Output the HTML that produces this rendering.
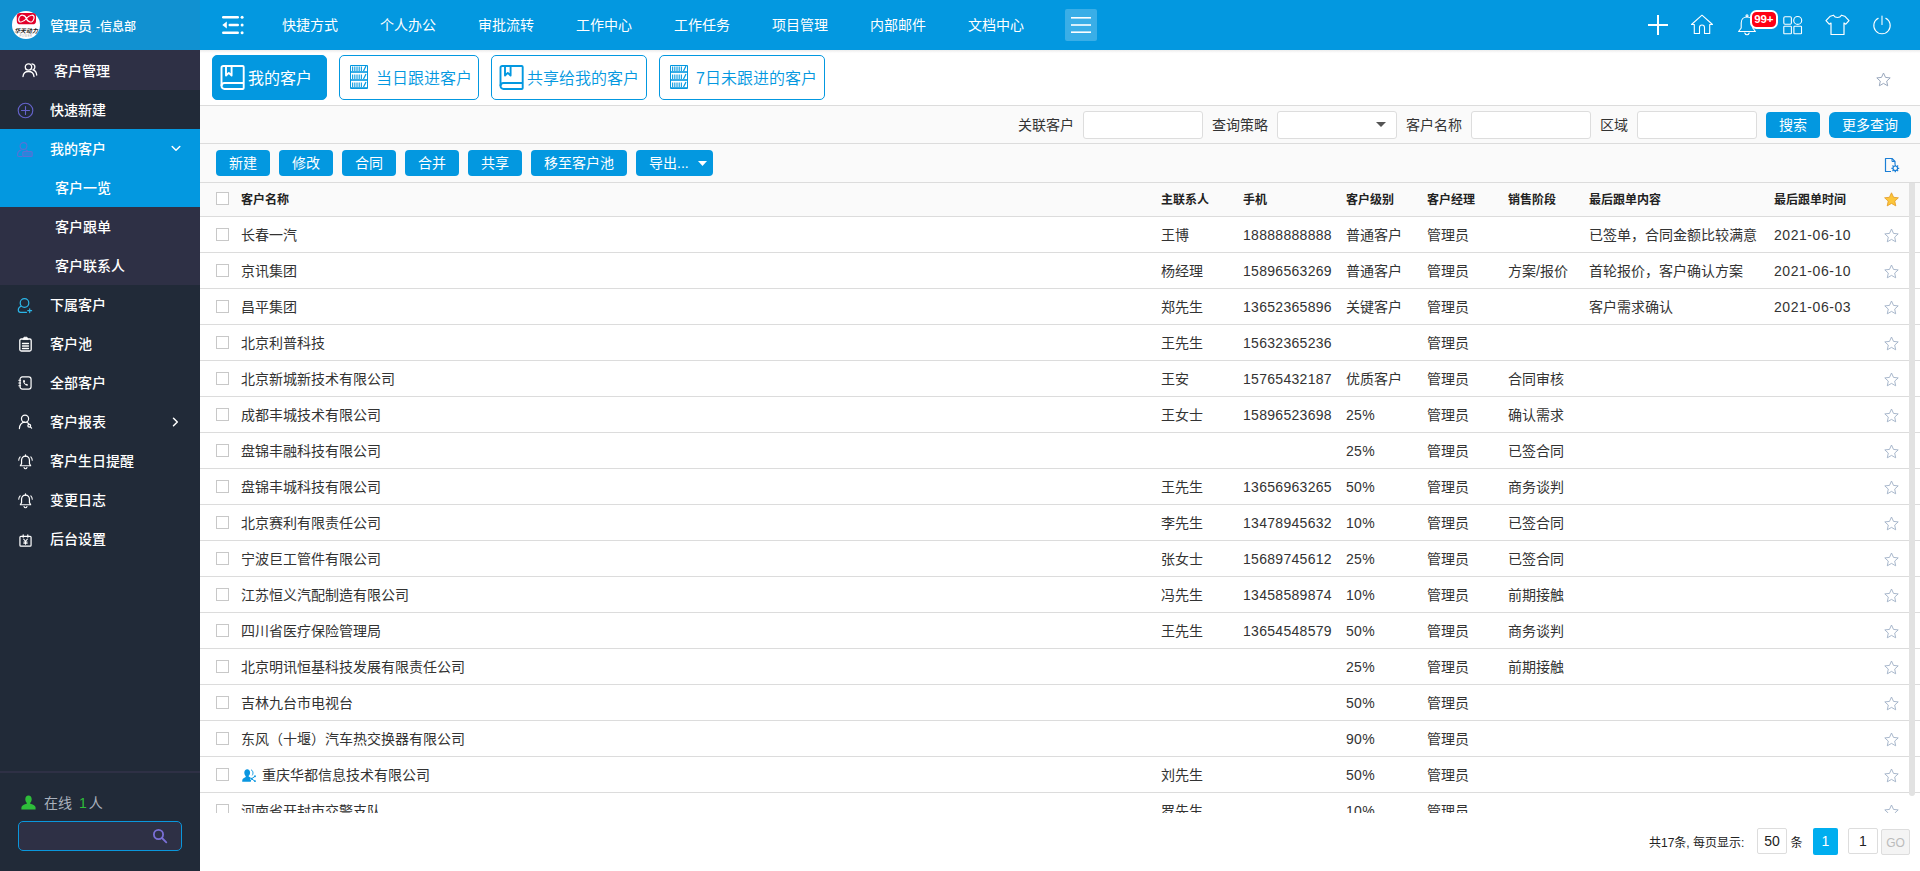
<!DOCTYPE html>
<html lang="zh-CN">
<head>
<meta charset="utf-8">
<title>客户一览</title>
<style>
*{box-sizing:border-box;margin:0;padding:0}
html,body{width:1920px;height:871px;overflow:hidden;background:#fff}
body{font-family:"Liberation Sans","Noto Sans CJK SC",sans-serif;font-size:14px;color:#333;position:relative}
svg{display:block}
#side{position:absolute;left:0;top:0;width:200px;height:871px;background:#212a38;color:#fff}
#side .hd{position:absolute;left:0;top:0;width:200px;height:50px;background:#1191d1}
#side .hd .logo{position:absolute;left:12px;top:11px;width:28px;height:28px}
#side .hd .nm{position:absolute;left:50px;top:0;line-height:52px;font-size:14px;color:#fff;white-space:nowrap;font-weight:500}
.mi{position:absolute;left:0;width:200px;height:39px;line-height:39px;font-size:14px;color:#fff;white-space:nowrap}
.mi .tx{position:absolute;left:50px;top:1px;font-weight:500}
.mi.sub .tx{left:55px}
.mi svg{position:absolute}
.bg2{background:#2e3045}
.bgb{background:#0398e0}
#top{position:absolute;left:200px;top:0;width:1720px;height:50px;background:#0398e0;color:#fff}
#top .nv{position:absolute;top:0;line-height:50px;font-size:14px;color:#fff;white-space:nowrap}
#top svg{position:absolute}
.tab{position:absolute;top:55px;height:45px;border:1px solid #0398e0;border-radius:5px;color:#0398e0;font-size:16px;line-height:43px;white-space:nowrap;background:#fff;font-weight:350}
.tab.on{background:#0398e0;color:#fff;font-weight:400}
.tab .tx{position:absolute;top:1px}
.tab svg{position:absolute}
.hl{position:absolute;left:200px;width:1720px;height:1px;background:#dcdcdc}
.band{position:absolute;left:200px;width:1720px;background:#fafafa}
.lb{position:absolute;top:106px;line-height:38px;font-size:14px;color:#333;white-space:nowrap}
.ip{position:absolute;top:111px;height:28px;width:120px;border:1px solid #ddd;border-radius:3px;background:#fff}
.btn{position:absolute;height:26px;line-height:26px;background:#0398e0;color:#fff;border-radius:4px;font-size:14px;text-align:center;white-space:nowrap}
#tbl{position:absolute;left:200px;top:183px;width:1720px;height:630px;overflow:hidden}
.th{position:absolute;left:0;top:0;width:1720px;height:33px;background:#fafafa;font-size:12px;font-weight:bold;color:#222;line-height:35px}
.tr{position:absolute;left:0;width:1720px;height:36px;border-top:1px solid #dcdcdc;line-height:37px;font-size:14px;color:#333}
.c{position:absolute;top:0;white-space:nowrap}
.cb{position:absolute;left:16px;width:13px;height:13px;border:1px solid #c8c8c8;background:#fff}
.num{letter-spacing:0.3px}
.dt{letter-spacing:0.55px}
.st{position:absolute;left:1683.500px}
#pg{position:absolute;left:200px;top:813px;width:1720px;height:58px;font-size:12px;color:#222}
#pg div{position:absolute;white-space:nowrap}
</style>
</head>
<body>
<div id="side">
<div class="hd">
<svg class="logo" viewBox="0 0 28 28"><circle cx="14" cy="14" r="14" fill="#fff"/>
<rect x="4.800" y="1.900" width="19.200" height="11.400" rx="3.400" fill="#e2002a"/>
<path transform="translate(14.400 7.600) skewX(-12)" d="M0 0C-1.900-3.800-7.600-5.200-7.600 0S-1.900 3.800 0 0C1.900-3.800 7.600-5.200 7.600 0S1.900 3.800 0 0z" fill="none" stroke="#fff" stroke-width="1.200"/>
<text x="14" y="21.600" font-size="5.900" font-weight="bold" font-style="italic" text-anchor="middle" fill="#1a1a1a" font-family="Liberation Sans,Noto Sans CJK SC,sans-serif">华天动力</text>
<text x="14" y="25.700" font-size="2.800" text-anchor="middle" fill="#aaa" letter-spacing="0.500" font-family="Liberation Sans,sans-serif">POWER</text></svg>
<div class="nm">管理员 <span style="font-size:12px">-信息部</span></div>
</div>
<div class="mi bg2" style="top:50px;height:40px;line-height:41px"><svg style="left:22px;top:12px" width="16" height="16" viewBox="0 0 16 16" fill="none" stroke="#fff" stroke-width="1.300" stroke-linecap="round"><circle cx="6.500" cy="5" r="3.200"/><path d="M1 14.500c.3-3.200 2.500-5 5.500-5s5.200 1.800 5.500 5"/><path d="M10 1.900c1.800.2 2.900 1.500 2.900 3.100 0 1.300-.7 2.300-1.700 2.800 1.900.7 3.300 2.500 3.500 5.200"/></svg><span class="tx" style="left:54px">客户管理</span></div>
<div class="mi " style="top:90px;height:39px;line-height:39px"><svg style="left:16.500px;top:12px" width="17" height="17" viewBox="0 0 17 17" fill="none" stroke="#6563cb" stroke-width="1.100" stroke-linecap="round"><circle cx="8.500" cy="8.500" r="7.300"/><path d="M8.500 4.500v8M4.500 8.500h8"/></svg><span class="tx">快速新建</span></div>
<div class="mi bgb" style="top:129px;height:39px;line-height:39px"><svg style="left:16px;top:12px" width="17" height="18" viewBox="0 0 17 18" fill="none" stroke="#5872d6" stroke-width="1.100" stroke-linecap="round"><circle cx="7.500" cy="5" r="3.400"/><path d="M6 15.500H3c-1 0-1.500-.6-1.500-1.500 0-2.500 1.500-4.300 3.500-5M10 9c.5.200 1 .5 1.400.9"/><rect x="6.800" y="10.500" width="9.400" height="5" rx="1" fill="rgba(88,114,214,.45)"/></svg><span class="tx">我的客户</span><svg style="left:171px;top:16px" width="10" height="7" viewBox="0 0 10 7" fill="none" stroke="#fff" stroke-width="1.500" stroke-linecap="round" stroke-linejoin="round"><path d="M1.200 1.500L5 5.300l3.800-3.800"/></svg></div>
<div class="mi bgb sub" style="top:168px;height:39px;line-height:39px"><span class="tx">客户一览</span></div>
<div class="mi bg2 sub" style="top:207px;height:39px;line-height:39px"><span class="tx">客户跟单</span></div>
<div class="mi bg2 sub" style="top:246px;height:39px;line-height:39px"><span class="tx">客户联系人</span></div>
<div class="mi " style="top:285px;height:39px;line-height:39px"><svg style="left:17px;top:12px" width="16" height="17" viewBox="0 0 16 17" fill="none" stroke="#2bb6e8" stroke-width="1.200" stroke-linecap="round"><ellipse cx="7.500" cy="6" rx="4.300" ry="4.300"/><path d="M4 9.300C2.200 10 1.300 11.400 1.300 13c0 1.500.8 2.300 2.200 2.300h6M12.700 11.800v3.800M10.800 13.700h3.800"/></svg><span class="tx">下属客户</span></div>
<div class="mi " style="top:324px;height:39px;line-height:39px"><svg style="left:18.500px;top:12px" width="13" height="16" viewBox="0 0 13 16" fill="none" stroke="#fff" stroke-width="1.300" stroke-linecap="round"><rect x=".8" y="3" width="11.400" height="12" rx="1.500"/><path d="M4 3.200L5 1.200h3l1 2z" fill="#fff" stroke-width=".8"/><path d="M3.500 7.500h6M3.500 10h6M3.500 12.500h6"/></svg><span class="tx">客户池</span></div>
<div class="mi " style="top:363px;height:39px;line-height:39px"><svg style="left:17.500px;top:12.500px" width="14" height="14" viewBox="0 0 15 15" fill="none" stroke="#fff" stroke-width="1.300" stroke-linecap="round"><rect x="2.200" y="1" width="11.800" height="13" rx="2.500"/><path d="M.8 4.500h2M.8 7.500h2M.8 10.500h2" stroke-width="1.100"/><path d="M6 4.300c-.8.500-.8 2.300.6 4.100s3 2.300 3.800 1.800l.4-.9-1.600-1-.8.500c-.6-.3-1.400-1.300-1.500-2l.7-.6-.6-1.800z" fill="#fff" stroke="none"/></svg><span class="tx">全部客户</span></div>
<div class="mi " style="top:402px;height:39px;line-height:39px"><svg style="left:17.500px;top:12px" width="15" height="16" viewBox="0 0 16 17" fill="none" stroke="#fff" stroke-width="1.300" stroke-linecap="round"><circle cx="7.500" cy="5" r="3.800"/><path d="M1.500 15.500c.2-3.500 2.300-6.300 5.500-6.800M9.500 9c.8.300 1.500.8 2 1.400"/><circle cx="12" cy="12.500" r="1.500"/><path d="M13.200 13.700l1.300 1.300"/></svg><span class="tx">客户报表</span><svg style="left:172px;top:15px" width="7" height="10" viewBox="0 0 7 10" fill="none" stroke="#fff" stroke-width="1.500" stroke-linecap="round" stroke-linejoin="round"><path d="M1.500 1.200L5.300 5 1.500 8.800"/></svg></div>
<div class="mi " style="top:441px;height:39px;line-height:39px"><svg style="left:17.500px;top:12.500px" width="15" height="16" viewBox="0 0 16 17" fill="none" stroke="#fff" stroke-width="1.300" stroke-linecap="round" stroke-linejoin="round"><path d="M8 2.200c-2.700 0-4.200 2-4.200 4.500v3.500l-1.300 2.300h11l-1.300-2.300V6.700c0-2.500-1.500-4.500-4.200-4.500z"/><path d="M8 .8v1.400M6.500 14.500c.3.800.9 1.200 1.500 1.200s1.200-.4 1.500-1.200"/><path d="M2.300 3C1.300 4 .8 5.200.8 6.700M13.700 3c1 1 1.500 2.200 1.500 3.700" stroke-width="1.100"/></svg><span class="tx">客户生日提醒</span></div>
<div class="mi " style="top:480px;height:39px;line-height:39px"><svg style="left:17.500px;top:12.500px" width="15" height="16" viewBox="0 0 16 17" fill="none" stroke="#fff" stroke-width="1.300" stroke-linecap="round" stroke-linejoin="round"><path d="M8 2.200c-2.700 0-4.200 2-4.200 4.500v3.500l-1.300 2.300h11l-1.300-2.300V6.700c0-2.500-1.500-4.500-4.200-4.500z"/><path d="M8 .8v1.400M6.500 14.500c.3.800.9 1.200 1.500 1.200s1.200-.4 1.500-1.200"/><path d="M2.300 3C1.300 4 .8 5.200.8 6.700M13.700 3c1 1 1.500 2.200 1.500 3.700" stroke-width="1.100"/></svg><span class="tx">变更日志</span></div>
<div class="mi " style="top:519px;height:39px;line-height:39px"><svg style="left:18.500px;top:14.500px" width="13" height="13" viewBox="0 0 14 14" fill="none" stroke="#fff" stroke-width="1.300" stroke-linecap="round"><rect x="1" y="2.500" width="12" height="10.500" rx="1"/><path d="M4.500 1v2.500M9.500 1v2.500"/><path d="M5 5.500l2 2.300 2-2.300M7 7.800v3.200M5.200 8.500h3.600M5.200 10h3.600" stroke-width="1.100"/></svg><span class="tx">后台设置</span></div>
<div style="position:absolute;left:0;top:771px;width:200px;height:2px;background:#2e3045"></div>
<svg style="position:absolute;left:21px;top:795px" width="15" height="15" viewBox="0 0 15 15"><path d="M7.500 0.500c2 0 3.200 1.600 3.200 3.700 0 1.500-.6 2.900-1.500 3.600v.9c2.500.6 5 1.700 5.300 3.300.1.900.1 1.700.1 2.500H.4c0-.8 0-1.600.1-2.500.3-1.600 2.800-2.700 5.300-3.300v-.9c-.9-.7-1.500-2.100-1.500-3.600 0-2.100 1.200-3.700 3.200-3.700z" fill="#2ebd3a"/></svg>
<div style="position:absolute;left:44px;top:793px;line-height:20px;font-size:14px;color:#a9b1bd;white-space:nowrap">在线 <span style="color:#2ebd3a;margin:0 2px 0 3px">1</span>人</div>
<div style="position:absolute;left:18px;top:821px;width:164px;height:30px;border:1px solid #0a97dc;border-radius:5px;background:#2e3045"></div>
<svg style="position:absolute;left:152px;top:828px" width="16" height="16" viewBox="0 0 16 16" fill="none" stroke="#7a6fd6" stroke-width="1.800" stroke-linecap="round"><circle cx="6.500" cy="6.500" r="4.600"/><path d="M10 10l4.300 4.300"/></svg>
</div>
<div id="top">
<svg style="left:22px;top:15px" width="22" height="20" viewBox="0 0 22 20" fill="#fff"><rect x="0" y="1" width="17" height="2.400" rx="1.200"/><rect x="6.500" y="8.800" width="10.500" height="2.400" rx="1.200"/><rect x="0" y="16.600" width="17" height="2.400" rx="1.200"/><circle cx="20.100" cy="2.200" r="1.500"/><circle cx="20.100" cy="10" r="1.500"/><circle cx="20.100" cy="17.800" r="1.500"/><path d="M.3 10l4.500-3.600v7.200z"/></svg>
<div class="nv" style="left:82px">快捷方式</div>
<div class="nv" style="left:180px">个人办公</div>
<div class="nv" style="left:278px">审批流转</div>
<div class="nv" style="left:376px">工作中心</div>
<div class="nv" style="left:474px">工作任务</div>
<div class="nv" style="left:572px">项目管理</div>
<div class="nv" style="left:670px">内部邮件</div>
<div class="nv" style="left:768px">文档中心</div>
<div style="position:absolute;left:865px;top:9px;width:32px;height:32px;background:rgba(255,255,255,.22);border-radius:2px"></div>
<svg style="left:871px;top:16px" width="20" height="18" viewBox="0 0 20 18" fill="#fff"><rect x="0" y="1" width="20" height="1.600"/><rect x="0" y="8.200" width="20" height="1.600"/><rect x="0" y="15.400" width="20" height="1.600"/></svg>
<svg style="left:1448px;top:15px" width="20" height="20" viewBox="0 0 20 20" fill="#fff"><rect x="9" y="0" width="2" height="20"/><rect x="0" y="9" width="20" height="2"/></svg>
<svg style="left:1490px;top:14px" width="24" height="21" viewBox="0 0 24 21" fill="none" stroke="#fff" stroke-width="1.100" stroke-linejoin="round" stroke-linecap="round"><path d="M1.500 10.500L12 1.200l10.500 9.300h-2.800V19.500h-5.200v-6c0-1.500-1-2.500-2.500-2.500s-2.500 1-2.500 2.500v6H4.300V10.500z"/></svg>
<svg style="left:1537px;top:14px" width="20" height="22" viewBox="0 0 20 22" fill="none" stroke="#fff" stroke-width="1.100" stroke-linejoin="round" stroke-linecap="round"><path d="M10 3c-3.500 0-5.800 2.600-5.800 6v5l-2.600 3.500h16.800L15.800 14V9c0-3.400-2.300-6-5.800-6z"/><circle cx="10" cy="1.800" r="1"/><path d="M7.800 19c.4 1.200 1.200 1.800 2.200 1.800s1.800-.6 2.200-1.800"/></svg>
<div style="position:absolute;left:1549.500px;top:10px;width:28.500px;height:19px;border:2px solid #fff;border-radius:6.500px;background:#ff0014;color:#fff;font-size:11.500px;font-weight:bold;line-height:15px;text-align:center;letter-spacing:-.2px">99+</div>
<svg style="left:1583px;top:16px" width="20" height="18.500" viewBox="0 0 20 19" preserveAspectRatio="none" fill="none" stroke="#fff" stroke-width="1.100"><rect x=".8" y=".8" width="7.600" height="7.600" rx="1.200"/><circle cx="14.700" cy="4.600" r="4"/><rect x=".8" y="10.600" width="7.600" height="7.600" rx=".6"/><rect x="10.900" y="10.600" width="7.600" height="7.600" rx=".6"/></svg>
<svg style="left:1625px;top:14px" width="25" height="22" viewBox="0 0 25 22" fill="none" stroke="#fff" stroke-width="1.200" stroke-linejoin="round"><path d="M8.500 1.200c.8 1.500 2.200 2.300 4 2.300s3.200-.8 4-2.300l3.200 1 4.300 4.500-3.200 3.500-1.800-1.200V20.500h-13V9l-1.800 1.200L1 6.700l4.300-4.500z"/></svg>
<svg style="left:1672px;top:15px" width="20" height="20" viewBox="0 0 20 20" fill="none" stroke="#fff" stroke-width="1.100" stroke-linecap="round"><path d="M10 1v8.500"/><path d="M6.200 3.300A8.200 8.200 0 1 0 13.800 3.300"/></svg>
</div>
<div style="position:absolute;left:200px;top:50px;width:1720px;height:3px;background:linear-gradient(#ececec,#fff)"></div>
<div class="tab on" style="left:212px;width:115px"><svg style="left:7px;top:9px" width="25" height="25" viewBox="0 0 25 25" fill="none" stroke="#fff" stroke-width="1.900" stroke-linejoin="round"><path d="M3.200 1h19.500a1 1 0 0 1 1 1v21a1 1 0 0 1-1 1H4.500a3 3 0 0 1-3-3V2.700A1.700 1.700 0 0 1 3.200 1z"/><path d="M1.500 21c0-1.800 1.300-3 3-3h19.200"/><path d="M6 1v9.500l2.800-2.600 2.800 2.600V1" /></svg><span class="tx" style="left:35px">我的客户</span></div>
<div class="tab" style="left:339px;width:140px"><svg style="left:10px;top:9px" width="18" height="24" viewBox="0 0 18 24" fill="none" stroke="#0398e0" stroke-width="1"><path d="M.5.500h17M.5.500v23M17.500.500v23M.5 23.500h17" stroke-width="1"/><path d="M1 7.0h16" stroke-width="1.600"/><path d="M2.5 1.5v4.500" stroke-width=".9"/><path d="M4.3 1.5v4.500" stroke-width=".9"/><path d="M6.1 1.5v4.500" stroke-width=".9"/><path d="M7.9 1.5v4.500" stroke-width=".9"/><path d="M9.7 1.5v4.500" stroke-width=".9"/><path d="M11.5 1.5v4.500" stroke-width=".9"/><path d="M16 1.0l-2.500 5" stroke-width="1.300"/><path d="M1 15.0h16" stroke-width="1.600"/><path d="M2.5 9.5v4.500" stroke-width=".9"/><path d="M4.3 9.5v4.500" stroke-width=".9"/><path d="M6.1 9.5v4.500" stroke-width=".9"/><path d="M7.9 9.5v4.500" stroke-width=".9"/><path d="M9.7 9.5v4.500" stroke-width=".9"/><path d="M11.5 9.5v4.500" stroke-width=".9"/><path d="M16 9.0l-2.500 5" stroke-width="1.300"/><path d="M1 23.0h16" stroke-width="1.600"/><path d="M2.5 17.5v4.500" stroke-width=".9"/><path d="M4.3 17.5v4.500" stroke-width=".9"/><path d="M6.1 17.5v4.500" stroke-width=".9"/><path d="M7.9 17.5v4.500" stroke-width=".9"/><path d="M9.7 17.5v4.500" stroke-width=".9"/><path d="M11.5 17.5v4.500" stroke-width=".9"/><path d="M16 17.0l-2.500 5" stroke-width="1.300"/></svg><span class="tx" style="left:36px">当日跟进客户</span></div>
<div class="tab" style="left:491px;width:156px"><svg style="left:7px;top:9px" width="25" height="25" viewBox="0 0 25 25" fill="none" stroke="#0398e0" stroke-width="1.900" stroke-linejoin="round"><path d="M3.200 1h19.500a1 1 0 0 1 1 1v21a1 1 0 0 1-1 1H4.500a3 3 0 0 1-3-3V2.700A1.700 1.700 0 0 1 3.200 1z"/><path d="M1.500 21c0-1.800 1.300-3 3-3h19.200"/><path d="M6 1v9.500l2.800-2.600 2.800 2.600V1" /></svg><span class="tx" style="left:35px">共享给我的客户</span></div>
<div class="tab" style="left:659px;width:166px"><svg style="left:10px;top:9px" width="18" height="24" viewBox="0 0 18 24" fill="none" stroke="#0398e0" stroke-width="1"><path d="M.5.500h17M.5.500v23M17.500.500v23M.5 23.500h17" stroke-width="1"/><path d="M1 7.0h16" stroke-width="1.600"/><path d="M2.5 1.5v4.500" stroke-width=".9"/><path d="M4.3 1.5v4.500" stroke-width=".9"/><path d="M6.1 1.5v4.500" stroke-width=".9"/><path d="M7.9 1.5v4.500" stroke-width=".9"/><path d="M9.7 1.5v4.500" stroke-width=".9"/><path d="M11.5 1.5v4.500" stroke-width=".9"/><path d="M16 1.0l-2.500 5" stroke-width="1.300"/><path d="M1 15.0h16" stroke-width="1.600"/><path d="M2.5 9.5v4.500" stroke-width=".9"/><path d="M4.3 9.5v4.500" stroke-width=".9"/><path d="M6.1 9.5v4.500" stroke-width=".9"/><path d="M7.9 9.5v4.500" stroke-width=".9"/><path d="M9.7 9.5v4.500" stroke-width=".9"/><path d="M11.5 9.5v4.500" stroke-width=".9"/><path d="M16 9.0l-2.500 5" stroke-width="1.300"/><path d="M1 23.0h16" stroke-width="1.600"/><path d="M2.5 17.5v4.500" stroke-width=".9"/><path d="M4.3 17.5v4.500" stroke-width=".9"/><path d="M6.1 17.5v4.500" stroke-width=".9"/><path d="M7.9 17.5v4.500" stroke-width=".9"/><path d="M9.7 17.5v4.500" stroke-width=".9"/><path d="M11.5 17.5v4.500" stroke-width=".9"/><path d="M16 17.0l-2.500 5" stroke-width="1.300"/></svg><span class="tx" style="left:36px">7日未跟进的客户</span></div>
<div style="position:absolute;left:1876px;top:72px"><svg width="15" height="15" viewBox="0 0 15 15" fill="none" stroke="#9aa8bd" stroke-width="1" stroke-linejoin="round"><path d="M7.500 1l2 4.400 4.700.5-3.500 3.200 1 4.700-4.200-2.400-4.200 2.400 1-4.700L.8 5.900l4.700-.5z"/></svg></div>
<div class="band" style="top:105px;height:78px"></div>
<div class="hl" style="top:105px"></div><div class="hl" style="top:143px"></div><div class="hl" style="top:182px"></div>
<div class="lb" style="left:1018px">关联客户</div>
<div class="lb" style="left:1212px">查询策略</div>
<div class="lb" style="left:1406px">客户名称</div>
<div class="lb" style="left:1600px">区域</div>
<div class="ip" style="left:1083px"></div>
<div class="ip" style="left:1277px"></div>
<div class="ip" style="left:1471px"></div>
<div class="ip" style="left:1637px"></div>
<svg style="position:absolute;left:1376px;top:122px" width="10" height="5" viewBox="0 0 10 5"><path d="M0 0h10L5 5z" fill="#555"/></svg>
<div class="btn" style="left:1766px;top:112px;width:54px">搜索</div>
<div class="btn" style="left:1829px;top:112px;width:82px;border-radius:6px">更多查询</div>
<div class="btn" style="left:216px;top:150px;width:54px">新建</div>
<div class="btn" style="left:279px;top:150px;width:54px">修改</div>
<div class="btn" style="left:342px;top:150px;width:54px">合同</div>
<div class="btn" style="left:405px;top:150px;width:54px">合并</div>
<div class="btn" style="left:468px;top:150px;width:54px">共享</div>
<div class="btn" style="left:531px;top:150px;width:96px">移至客户池</div>
<div class="btn" style="left:636px;top:150px;width:77px;text-align:left;padding-left:13px">导出...<svg style="position:absolute;left:62px;top:11px" width="9" height="5" viewBox="0 0 9 5"><path d="M0 0h9L4.500 5z" fill="#fff"/></svg></div>
<svg style="position:absolute;left:1884px;top:157px" width="16" height="16" viewBox="0 0 16 16" fill="none" stroke="#1b7fd6" stroke-width="1.200" stroke-linejoin="round"><path d="M7 14.500H1.500v-13h6.500l3 3v3"/><path d="M8 1.500v3h3" stroke-width="1"/><circle cx="11.300" cy="11.300" r="2.300"/><path d="M11.300 7.400v1.500M11.300 13.700v1.500M7.400 11.300h1.500M13.700 11.300h1.500M8.500 8.500l1.100 1.100M13 13l1.100 1.100M14.100 8.500L13 9.600M9.600 13l-1.100 1.100" stroke-width="1.300"/></svg>
<div id="tbl">
<div class="th"><span class="cb" style="top:9px"></span>
<span class="c" style="left:41px">客户名称</span>
<span class="c" style="left:961px">主联系人</span>
<span class="c" style="left:1043px">手机</span>
<span class="c" style="left:1146px">客户级别</span>
<span class="c" style="left:1227px">客户经理</span>
<span class="c" style="left:1308px">销售阶段</span>
<span class="c" style="left:1389px">最后跟单内容</span>
<span class="c" style="left:1574px">最后跟单时间</span>
<svg class="st" style="top:9px" width="15" height="15" viewBox="0 0 15 15"><path d="M7.500 .8l2.100 4.500 4.800.5-3.600 3.300 1 4.800-4.300-2.500-4.300 2.500 1-4.800L.6 5.800l4.800-.5z" fill="#fcc63a" stroke="#e39a27" stroke-width=".8" stroke-linejoin="round"/></svg>
</div>
<div class="tr" style="top:33px"><span class="cb" style="top:11px"></span>
<span class="c" style="left:41px">长春一汽</span>
<span class="c" style="left:961px">王博</span>
<span class="c num" style="left:1043px">18888888888</span>
<span class="c" style="left:1146px">普通客户</span>
<span class="c" style="left:1227px">管理员</span>
<span class="c" style="left:1389px">已签单，合同金额比较满意</span>
<span class="c dt" style="left:1574px">2021-06-10</span>
<span class="st" style="top:10.500px"><svg width="15" height="15" viewBox="0 0 15 15" fill="none" stroke="#9fb0c6" stroke-width="0.9" stroke-linejoin="round"><path d="M7.500 1l2 4.400 4.700.5-3.500 3.200 1 4.700-4.200-2.400-4.200 2.400 1-4.700L.8 5.900l4.700-.5z"/></svg></span>
</div>
<div class="tr" style="top:69px"><span class="cb" style="top:11px"></span>
<span class="c" style="left:41px">京讯集团</span>
<span class="c" style="left:961px">杨经理</span>
<span class="c num" style="left:1043px">15896563269</span>
<span class="c" style="left:1146px">普通客户</span>
<span class="c" style="left:1227px">管理员</span>
<span class="c" style="left:1308px">方案/报价</span>
<span class="c" style="left:1389px">首轮报价，客户确认方案</span>
<span class="c dt" style="left:1574px">2021-06-10</span>
<span class="st" style="top:10.500px"><svg width="15" height="15" viewBox="0 0 15 15" fill="none" stroke="#9fb0c6" stroke-width="0.9" stroke-linejoin="round"><path d="M7.500 1l2 4.400 4.700.5-3.500 3.200 1 4.700-4.200-2.400-4.200 2.400 1-4.700L.8 5.900l4.700-.5z"/></svg></span>
</div>
<div class="tr" style="top:105px"><span class="cb" style="top:11px"></span>
<span class="c" style="left:41px">昌平集团</span>
<span class="c" style="left:961px">郑先生</span>
<span class="c num" style="left:1043px">13652365896</span>
<span class="c" style="left:1146px">关键客户</span>
<span class="c" style="left:1227px">管理员</span>
<span class="c" style="left:1389px">客户需求确认</span>
<span class="c dt" style="left:1574px">2021-06-03</span>
<span class="st" style="top:10.500px"><svg width="15" height="15" viewBox="0 0 15 15" fill="none" stroke="#9fb0c6" stroke-width="0.9" stroke-linejoin="round"><path d="M7.500 1l2 4.400 4.700.5-3.500 3.200 1 4.700-4.200-2.400-4.200 2.400 1-4.700L.8 5.900l4.700-.5z"/></svg></span>
</div>
<div class="tr" style="top:141px"><span class="cb" style="top:11px"></span>
<span class="c" style="left:41px">北京利普科技</span>
<span class="c" style="left:961px">王先生</span>
<span class="c num" style="left:1043px">15632365236</span>
<span class="c" style="left:1227px">管理员</span>
<span class="st" style="top:10.500px"><svg width="15" height="15" viewBox="0 0 15 15" fill="none" stroke="#9fb0c6" stroke-width="0.9" stroke-linejoin="round"><path d="M7.500 1l2 4.400 4.700.5-3.500 3.200 1 4.700-4.200-2.400-4.200 2.400 1-4.700L.8 5.900l4.700-.5z"/></svg></span>
</div>
<div class="tr" style="top:177px"><span class="cb" style="top:11px"></span>
<span class="c" style="left:41px">北京新城新技术有限公司</span>
<span class="c" style="left:961px">王安</span>
<span class="c num" style="left:1043px">15765432187</span>
<span class="c" style="left:1146px">优质客户</span>
<span class="c" style="left:1227px">管理员</span>
<span class="c" style="left:1308px">合同审核</span>
<span class="st" style="top:10.500px"><svg width="15" height="15" viewBox="0 0 15 15" fill="none" stroke="#9fb0c6" stroke-width="0.9" stroke-linejoin="round"><path d="M7.500 1l2 4.400 4.700.5-3.500 3.200 1 4.700-4.200-2.400-4.200 2.400 1-4.700L.8 5.900l4.700-.5z"/></svg></span>
</div>
<div class="tr" style="top:213px"><span class="cb" style="top:11px"></span>
<span class="c" style="left:41px">成都丰城技术有限公司</span>
<span class="c" style="left:961px">王女士</span>
<span class="c num" style="left:1043px">15896523698</span>
<span class="c num" style="left:1146px">25%</span>
<span class="c" style="left:1227px">管理员</span>
<span class="c" style="left:1308px">确认需求</span>
<span class="st" style="top:10.500px"><svg width="15" height="15" viewBox="0 0 15 15" fill="none" stroke="#9fb0c6" stroke-width="0.9" stroke-linejoin="round"><path d="M7.500 1l2 4.400 4.700.5-3.500 3.200 1 4.700-4.200-2.400-4.200 2.400 1-4.700L.8 5.900l4.700-.5z"/></svg></span>
</div>
<div class="tr" style="top:249px"><span class="cb" style="top:11px"></span>
<span class="c" style="left:41px">盘锦丰融科技有限公司</span>
<span class="c num" style="left:1146px">25%</span>
<span class="c" style="left:1227px">管理员</span>
<span class="c" style="left:1308px">已签合同</span>
<span class="st" style="top:10.500px"><svg width="15" height="15" viewBox="0 0 15 15" fill="none" stroke="#9fb0c6" stroke-width="0.9" stroke-linejoin="round"><path d="M7.500 1l2 4.400 4.700.5-3.500 3.200 1 4.700-4.200-2.400-4.200 2.400 1-4.700L.8 5.900l4.700-.5z"/></svg></span>
</div>
<div class="tr" style="top:285px"><span class="cb" style="top:11px"></span>
<span class="c" style="left:41px">盘锦丰城科技有限公司</span>
<span class="c" style="left:961px">王先生</span>
<span class="c num" style="left:1043px">13656963265</span>
<span class="c num" style="left:1146px">50%</span>
<span class="c" style="left:1227px">管理员</span>
<span class="c" style="left:1308px">商务谈判</span>
<span class="st" style="top:10.500px"><svg width="15" height="15" viewBox="0 0 15 15" fill="none" stroke="#9fb0c6" stroke-width="0.9" stroke-linejoin="round"><path d="M7.500 1l2 4.400 4.700.5-3.500 3.200 1 4.700-4.200-2.400-4.200 2.400 1-4.700L.8 5.900l4.700-.5z"/></svg></span>
</div>
<div class="tr" style="top:321px"><span class="cb" style="top:11px"></span>
<span class="c" style="left:41px">北京赛利有限责任公司</span>
<span class="c" style="left:961px">李先生</span>
<span class="c num" style="left:1043px">13478945632</span>
<span class="c num" style="left:1146px">10%</span>
<span class="c" style="left:1227px">管理员</span>
<span class="c" style="left:1308px">已签合同</span>
<span class="st" style="top:10.500px"><svg width="15" height="15" viewBox="0 0 15 15" fill="none" stroke="#9fb0c6" stroke-width="0.9" stroke-linejoin="round"><path d="M7.500 1l2 4.400 4.700.5-3.500 3.200 1 4.700-4.200-2.400-4.200 2.400 1-4.700L.8 5.900l4.700-.5z"/></svg></span>
</div>
<div class="tr" style="top:357px"><span class="cb" style="top:11px"></span>
<span class="c" style="left:41px">宁波巨工管件有限公司</span>
<span class="c" style="left:961px">张女士</span>
<span class="c num" style="left:1043px">15689745612</span>
<span class="c num" style="left:1146px">25%</span>
<span class="c" style="left:1227px">管理员</span>
<span class="c" style="left:1308px">已签合同</span>
<span class="st" style="top:10.500px"><svg width="15" height="15" viewBox="0 0 15 15" fill="none" stroke="#9fb0c6" stroke-width="0.9" stroke-linejoin="round"><path d="M7.500 1l2 4.400 4.700.5-3.500 3.200 1 4.700-4.200-2.400-4.200 2.400 1-4.700L.8 5.900l4.700-.5z"/></svg></span>
</div>
<div class="tr" style="top:393px"><span class="cb" style="top:11px"></span>
<span class="c" style="left:41px">江苏恒义汽配制造有限公司</span>
<span class="c" style="left:961px">冯先生</span>
<span class="c num" style="left:1043px">13458589874</span>
<span class="c num" style="left:1146px">10%</span>
<span class="c" style="left:1227px">管理员</span>
<span class="c" style="left:1308px">前期接触</span>
<span class="st" style="top:10.500px"><svg width="15" height="15" viewBox="0 0 15 15" fill="none" stroke="#9fb0c6" stroke-width="0.9" stroke-linejoin="round"><path d="M7.500 1l2 4.400 4.700.5-3.500 3.200 1 4.700-4.200-2.400-4.200 2.400 1-4.700L.8 5.900l4.700-.5z"/></svg></span>
</div>
<div class="tr" style="top:429px"><span class="cb" style="top:11px"></span>
<span class="c" style="left:41px">四川省医疗保险管理局</span>
<span class="c" style="left:961px">王先生</span>
<span class="c num" style="left:1043px">13654548579</span>
<span class="c num" style="left:1146px">50%</span>
<span class="c" style="left:1227px">管理员</span>
<span class="c" style="left:1308px">商务谈判</span>
<span class="st" style="top:10.500px"><svg width="15" height="15" viewBox="0 0 15 15" fill="none" stroke="#9fb0c6" stroke-width="0.9" stroke-linejoin="round"><path d="M7.500 1l2 4.400 4.700.5-3.500 3.200 1 4.700-4.200-2.400-4.200 2.400 1-4.700L.8 5.900l4.700-.5z"/></svg></span>
</div>
<div class="tr" style="top:465px"><span class="cb" style="top:11px"></span>
<span class="c" style="left:41px">北京明讯恒基科技发展有限责任公司</span>
<span class="c num" style="left:1146px">25%</span>
<span class="c" style="left:1227px">管理员</span>
<span class="c" style="left:1308px">前期接触</span>
<span class="st" style="top:10.500px"><svg width="15" height="15" viewBox="0 0 15 15" fill="none" stroke="#9fb0c6" stroke-width="0.9" stroke-linejoin="round"><path d="M7.500 1l2 4.400 4.700.5-3.500 3.200 1 4.700-4.200-2.400-4.200 2.400 1-4.700L.8 5.900l4.700-.5z"/></svg></span>
</div>
<div class="tr" style="top:501px"><span class="cb" style="top:11px"></span>
<span class="c" style="left:41px">吉林九台市电视台</span>
<span class="c num" style="left:1146px">50%</span>
<span class="c" style="left:1227px">管理员</span>
<span class="st" style="top:10.500px"><svg width="15" height="15" viewBox="0 0 15 15" fill="none" stroke="#9fb0c6" stroke-width="0.9" stroke-linejoin="round"><path d="M7.500 1l2 4.400 4.700.5-3.500 3.200 1 4.700-4.200-2.400-4.200 2.400 1-4.700L.8 5.900l4.700-.5z"/></svg></span>
</div>
<div class="tr" style="top:537px"><span class="cb" style="top:11px"></span>
<span class="c" style="left:41px">东风（十堰）汽车热交换器有限公司</span>
<span class="c num" style="left:1146px">90%</span>
<span class="c" style="left:1227px">管理员</span>
<span class="st" style="top:10.500px"><svg width="15" height="15" viewBox="0 0 15 15" fill="none" stroke="#9fb0c6" stroke-width="0.9" stroke-linejoin="round"><path d="M7.500 1l2 4.400 4.700.5-3.500 3.200 1 4.700-4.200-2.400-4.200 2.400 1-4.700L.8 5.900l4.700-.5z"/></svg></span>
</div>
<div class="tr" style="top:573px"><span class="cb" style="top:11px"></span>
<svg style="position:absolute;left:42px;top:12px" width="14" height="13" viewBox="0 0 14 13"><path d="M5.200 .2c1.700 0 2.900 1.400 2.900 3.300 0 1.400-.6 2.600-1.400 3.300v.8c1 .4 1.800.9 2.300 1.500l-1 1.200 1.200 1.200-.5 1.300H.2c0-1.600.2-2.600 1-3.300.7-.6 1.700-1 2.500-1.400v-1C2.900 6.300 2.300 5 2.300 3.500 2.300 1.600 3.500.2 5.200.2z" fill="#0a96e0"/><path d="M9 .8c1.300.5 2 1.700 2 3.200 0 .9-.3 1.800-.8 2.400" stroke="#0a96e0" fill="none" stroke-width=".9"/><path d="M13 7.300L9.500 9.800l3.500 2.400" stroke="#0a96e0" stroke-width="1" fill="none"/><circle cx="13" cy="7.300" r=".95" fill="#0a96e0"/><circle cx="9.500" cy="9.800" r=".95" fill="#0a96e0"/><circle cx="13" cy="12.100" r=".95" fill="#0a96e0"/></svg>
<span class="c" style="left:62px">重庆华都信息技术有限公司</span>
<span class="c" style="left:961px">刘先生</span>
<span class="c num" style="left:1146px">50%</span>
<span class="c" style="left:1227px">管理员</span>
<span class="st" style="top:10.500px"><svg width="15" height="15" viewBox="0 0 15 15" fill="none" stroke="#9fb0c6" stroke-width="0.9" stroke-linejoin="round"><path d="M7.500 1l2 4.400 4.700.5-3.500 3.200 1 4.700-4.200-2.400-4.200 2.400 1-4.700L.8 5.900l4.700-.5z"/></svg></span>
</div>
<div class="tr" style="top:609px"><span class="cb" style="top:11px"></span>
<span class="c" style="left:41px">河南省开封市交警支队</span>
<span class="c" style="left:961px">罗先生</span>
<span class="c num" style="left:1146px">10%</span>
<span class="c" style="left:1227px">管理员</span>
<span class="st" style="top:10.500px"><svg width="15" height="15" viewBox="0 0 15 15" fill="none" stroke="#9fb0c6" stroke-width="0.9" stroke-linejoin="round"><path d="M7.500 1l2 4.400 4.700.5-3.500 3.200 1 4.700-4.200-2.400-4.200 2.400 1-4.700L.8 5.900l4.700-.5z"/></svg></span>
</div>
</div>
<div style="position:absolute;left:1909px;top:183px;width:6px;height:613px;background:#e2e2e2;border-radius:0 0 3px 3px"></div>
<div id="pg">
<div style="left:1449px;top:20px;line-height:20px">共17条, 每页显示:</div>
<div style="left:1557px;top:15px;width:30px;height:26px;border:1px solid #ddd;border-radius:2px;font-size:14px;line-height:24px;text-align:center;color:#222">50</div>
<div style="left:1590.500px;top:20px;line-height:20px">条</div>
<div style="left:1613px;top:15px;width:25px;height:27px;background:#00aeef;border-radius:2px;font-size:14px;line-height:26px;text-align:center;color:#fff">1</div>
<div style="left:1648px;top:15px;width:30px;height:26px;border:1px solid #ddd;border-radius:2px;font-size:14px;line-height:24px;text-align:center;color:#222">1</div>
<div style="left:1681px;top:16px;width:29px;height:26px;border:1px solid #ddd;border-radius:2px;background:#f4f4f4;font-size:12px;line-height:26px;text-align:center;color:#bbb">GO</div>
</div>
</body>
</html>
